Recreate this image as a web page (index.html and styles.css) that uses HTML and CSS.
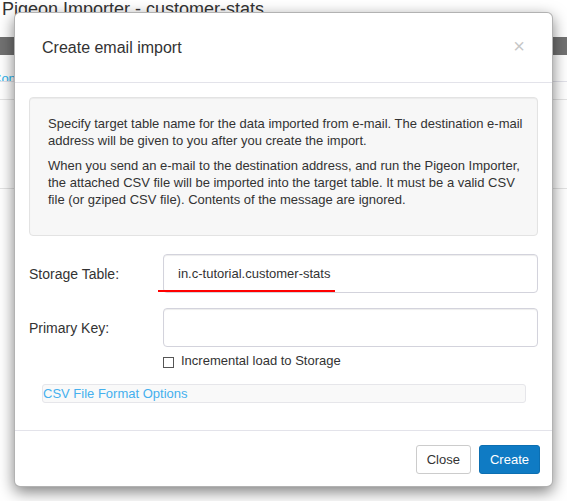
FILE: index.html
```html
<!DOCTYPE html>
<html>
<head>
<meta charset="utf-8">
<link rel="stylesheet" href="styles.css">
</head>
<body>
<div class="page">
  <h1 class="page-title">Pigeon Importer - customer-stats</h1>
  <div class="toolbar"></div>
  <div class="tabs"><a class="tab-link">Configuration</a></div>
  <div class="section"></div>
</div>

<div class="modal">
  <div class="modal-header">
    <h4 class="modal-title">Create email import</h4>
    <span class="close">×</span>
  </div>
  <div class="modal-body">
    <div class="well">
      <p>Specify target table name for the data imported from e-mail. The destination e-mail address will be given to you after you create the import.</p>
      <p>When you send an e-mail to the destination address, and run the Pigeon Importer, the attached CSV file will be imported into the target table. It must be a valid CSV file (or gziped CSV file). Contents of the message are ignored.</p>
    </div>
    <div class="form-row">
      <label class="form-label">Storage Table:</label>
      <div class="field">
        <div class="input">in.c-tutorial.customer-stats</div>
        <span class="mark"></span>
      </div>
    </div>
    <div class="form-row">
      <label class="form-label">Primary Key:</label>
      <div class="field">
        <div class="input"></div>
      </div>
    </div>
    <div class="check-row">
      <span class="checkbox"></span>
      <span class="check-label">Incremental load to Storage</span>
    </div>
    <div class="panel"><a class="panel-link">CSV File Format Options</a></div>
  </div>
  <div class="modal-footer">
    <span class="btn">Close</span>
    <span class="btn btn-primary">Create</span>
  </div>
</div>
</body>
</html>
```

FILE: styles.css
```css
* { box-sizing: border-box; }
html, body { margin: 0; padding: 0; background: #fff; }
body {
  width: 567px;
  height: 501px;
  overflow: hidden;
  position: relative;
  font-family: "Liberation Sans", Arial, sans-serif;
  color: #333;
}

.page-title {
  margin: 0;
  padding-left: 2px;
  font-size: 18px;
  line-height: 18px;
  font-weight: normal;
  color: #333;
}
.toolbar {
  margin-top: 19px;
  height: 18px;
  background: #727272;
}
.tabs {
  height: 27px;
  padding-top: 15px;
  border-bottom: 1px solid #e2e2ea;
  font-size: 13px;
  line-height: 17px;
  overflow: hidden;
  white-space: nowrap;
}
.tab-link {
  margin-left: -8px;
  color: #2bb4ee;
}
.section {
  margin-top: 17px;
  height: 90px;
  border-top: 1px solid #e3e3e3;
  border-bottom: 1px solid #e3e3e3;
}

.modal {
  position: absolute;
  left: 14px;
  top: 12px;
  width: 539px;
  background: #fff;
  border: 1px solid rgba(0,0,0,.3);
  border-radius: 6px;
  box-shadow: 0 5px 15px rgba(0,0,0,.5);
}
.modal-header {
  display: flex;
  justify-content: space-between;
  align-items: center;
  height: 70px;
  padding: 0 27px;
  border-bottom: 1px solid #e3e3ea;
}
.modal-title {
  margin: 0;
  font-size: 16px;
  line-height: 20px;
  font-weight: normal;
  color: #333;
}
.close {
  font-size: 20px;
  line-height: 1;
  font-weight: normal;
  color: #000;
  opacity: .22;
  margin-top: -3px;
}

.modal-body {
  padding: 14px 14px;
  font-size: 13px;
  line-height: 17px;
}
.well {
  background: #f7f7f7;
  border: 1px solid #e3e3e3;
  border-radius: 4px;
  box-shadow: inset 0 1px 1px rgba(0,0,0,.05);
  padding: 17px 10px 19px 18px;
  margin-bottom: 18px;
}
.well p {
  margin: 0 0 8px;
}

.form-row {
  display: flex;
  align-items: center;
  margin-bottom: 15px;
}
.form-label {
  width: 134px;
  font-size: 14px;
  line-height: 20px;
  color: #333;
}
.field {
  flex: 1;
  position: relative;
}
.input {
  height: 39px;
  border: 1px solid #d3d3dc;
  border-radius: 4px;
  box-shadow: inset 0 1px 1px rgba(0,0,0,.075);
  padding: 0 14px;
  font-size: 13px;
  line-height: 37px;
  color: #333;
}
.mark {
  position: absolute;
  left: -5px;
  top: 36px;
  width: 177px;
  height: 2px;
  background: #f00;
}
.form-row + .form-row { margin-bottom: 5px; }

.check-row {
  display: flex;
  align-items: center;
  padding-left: 134px;
  height: 17px;
}
.checkbox {
  width: 11px;
  height: 11px;
  border: 1px solid #555;
  background: #fff;
  margin-top: 3px;
  margin-right: 7px;
}
.check-label {
  font-size: 13px;
  line-height: 17px;
  color: #333;
}

.panel {
  margin: 15px 12px 13px 13px;
  height: 19px;
  border: 1px solid #e6e6ea;
  border-radius: 3px;
  background: #f9f9f9;
  font-size: 13px;
  line-height: 17px;
}
.panel-link {
  color: #45b0ee;
}

.modal-footer {
  display: flex;
  justify-content: flex-end;
  gap: 8px;
  padding: 14px 12px 12px;
  border-top: 1px solid #e3e3ea;
}
.btn {
  display: inline-block;
  height: 29px;
  padding: 5px 10px;
  border: 1px solid #ccc;
  border-radius: 3px;
  font-size: 13px;
  line-height: 17px;
  color: #333;
  background: #fff;
}
.btn-primary {
  background: #0f7bc4;
  border-color: #0c6fb2;
  color: #fff;
  padding: 5px 10px;
}
```
